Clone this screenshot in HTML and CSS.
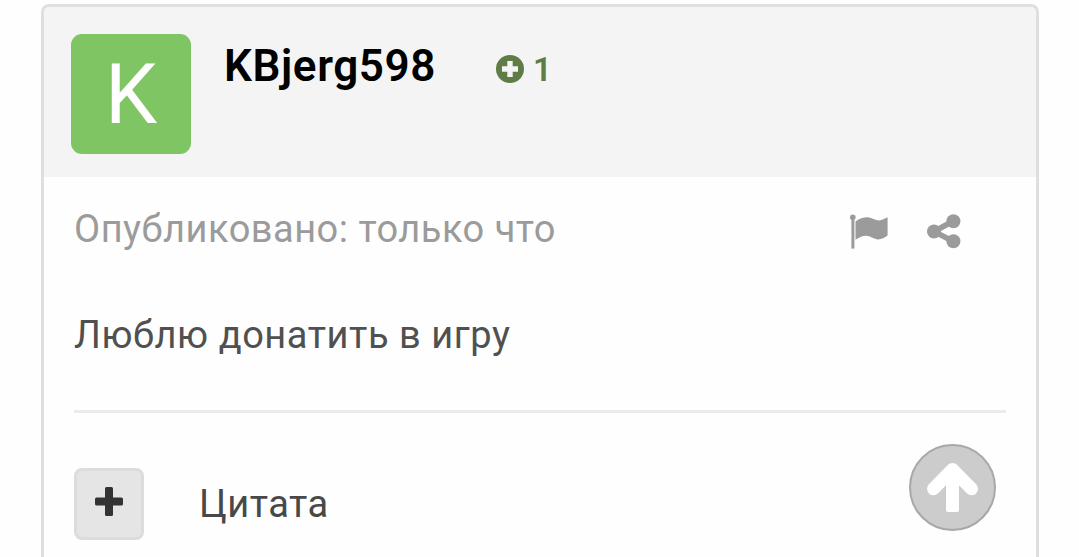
FILE: index.html
```html
<!DOCTYPE html>
<html lang="ru">
<head>
    <meta charset="UTF-8">
    <meta name="viewport" content="width=device-width, initial-scale=1.0">
    <title>KBjerg598</title>
    <link rel="stylesheet" href="styles.css">
</head>
<body>
    <article class="post">
        <header class="post-header">
            <div class="avatar">K</div>
            <div class="author">
                <span class="author-name">KBjerg598</span>
                <span class="reputation">
                    <svg width="28" height="28" viewBox="0 0 28 28">
                        <circle cx="14" cy="14" r="14" fill="#5f7c46"/>
                        <path d="M14 6v16M6 14h16" stroke="#f4f4f4" stroke-width="5.4"/>
                    </svg>
                    <span class="reputation-count">1</span>
                </span>
            </div>
        </header>

        <div class="post-body">
            <div class="post-meta">
                <span class="post-date">Опубликовано: только что</span>
                <div class="post-tools">
                    <svg class="icon-flag" width="38" height="35" viewBox="0 0 38 35">
                        <circle cx="2.8" cy="3.2" r="2.8"/>
                        <path d="M1.4 3h3v31.600h-3z"/>
                        <path d="M5.500 7.600C10 4 14.500 3 19 3.400C23 4 25.500 6.400 29 6.400C32 6.200 34.500 4.600 37.600 3.200V21.600C34.500 23.800 31.500 25.600 27.500 25.400C23 25 20.500 21.800 16 21.800C12 21.800 9 23.600 5.500 25.800Z"/>
                    </svg>
                    <svg class="icon-share" width="34" height="35" viewBox="0 0 34 35">
                        <path d="M26.400 7L7 17.500L26.400 27.500" fill="none" stroke="#9b9b9b" stroke-width="5.500"/>
                        <circle cx="7" cy="17.500" r="7"/>
                        <circle cx="26.400" cy="7.300" r="7"/>
                        <circle cx="26.400" cy="27.300" r="7"/>
                    </svg>
                </div>
            </div>

            <p class="post-text">Люблю донатить в игру</p>

            <div class="post-controls">
                <button class="multiquote">
                    <svg width="28" height="29" viewBox="0 0 28 29">
                        <rect x="10" y="0" width="8" height="29" rx="1.500"/>
                        <rect x="0" y="10.500" width="28" height="8" rx="1.500"/>
                    </svg>
                </button>
                <a class="quote">Цитата</a>
            </div>
        </div>
    </article>

    <a class="to-top">
        <svg width="51" height="50" viewBox="0 0 51 50">
            <path d="M25.500 6.500L6.500 25.800M25.500 6.500L44.500 25.800"/>
            <path class="stem" d="M19 10H32V47Q32 49 30 49H21Q19 49 19 47Z"/>
        </svg>
    </a>
</body>
</html>
```

FILE: styles.css
```css
body {
    margin: 0;
    background-color: #fefefe;
    font-family: Roboto, Arial, sans-serif;
}

.post {
    box-sizing: border-box;
    width: 998px;
    height: 553px;
    margin: 4px 0 0 41px;
    border: 3px solid #dfdfdf;
    border-bottom: none;
    border-radius: 8px 8px 0 0;
}

.post-header {
    display: flex;
    height: 143px;
    padding: 27px 27px 0;
    border-radius: 5px 5px 0 0;
    background-color: #f4f4f4;
}

.avatar {
    width: 120px;
    height: 120px;
    border-radius: 11px;
    background-color: #7fc564;
    color: #fff;
    font-size: 83px;
    line-height: 122px;
    text-align: center;
}

.author {
    display: flex;
    align-items: center;
    height: 64px;
    margin-left: 33px;
}

.author-name {
    color: #000;
    font-size: 44px;
    font-weight: 600;
    letter-spacing: 0.6px;
}

.reputation {
    display: flex;
    align-items: center;
    gap: 9px;
    margin: 6px 0 0 60px;
    color: #5f7c46;
}

.reputation-count {
    font-size: 33px;
    font-weight: 600;
}

.post-body {
    padding: 0 30px;
}

.post-meta {
    display: flex;
    justify-content: space-between;
    align-items: center;
    height: 104px;
}

.post-date {
    color: #9b9b9b;
    font-size: 38px;
    letter-spacing: 0.5px;
}

.post-tools {
    display: flex;
    gap: 39px;
    margin: 4px 45px 0 0;
    fill: #9b9b9b;
}

.post-text {
    height: 108px;
    margin: 0;
    color: #505050;
    font-size: 38px;
    line-height: 108px;
    letter-spacing: 0.55px;
}

.post-controls {
    display: flex;
    align-items: center;
    height: 144px;
    margin-top: 21px;
    border-top: 3px solid #ebebeb;
}

.multiquote {
    display: flex;
    align-items: center;
    justify-content: center;
    width: 70px;
    height: 72px;
    margin-top: 38px;
    padding: 0 0 5px;
    border: 3px solid #dcdcdc;
    border-radius: 8px;
    background-color: #e5e5e5;
    fill: #333;
}

.quote {
    margin: 38px 0 0 55px;
    color: #484848;
    font-size: 38px;
    letter-spacing: 0.5px;
}

/* floats over the page while scrolling */
.to-top {
    position: fixed;
    right: 83px;
    bottom: 26px;
    box-sizing: border-box;
    display: flex;
    align-items: center;
    justify-content: center;
    width: 87px;
    height: 87px;
    border: 2px solid #a8a8a8;
    border-radius: 50%;
    background-color: #ccc;
}

.to-top path {
    fill: none;
    stroke: #fff;
    stroke-width: 13;
    stroke-linecap: round;
}

.to-top .stem {
    fill: #fff;
    stroke: none;
}
```
